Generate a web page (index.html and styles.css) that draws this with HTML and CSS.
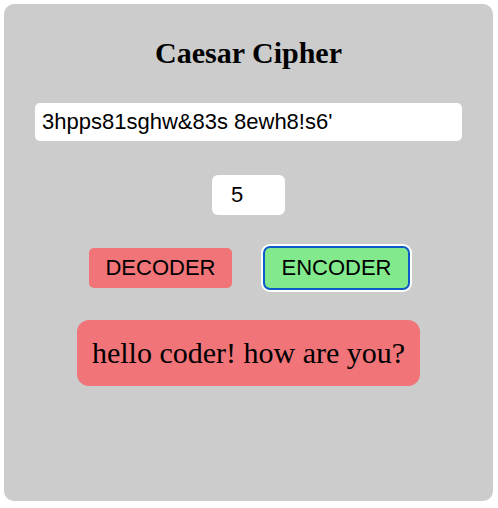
FILE: index.html
```html
<!DOCTYPE html>
<html lang="en">
<head>
<meta charset="utf-8">
<title>Caesar Cipher</title>
<link rel="stylesheet" href="styles.css">
</head>
<body>
<main class="card">
  <h2 class="title">Caesar Cipher</h2>
  <input class="text-input" type="text" value="3hpps81sghw&amp;83s 8ewh8!s6'">
  <input class="shift-input" type="number" value="5">
  <div class="actions">
    <button class="btn btn-decode" type="button">DECODER</button>
    <button class="btn btn-encode is-focused" type="button">ENCODER</button>
  </div>
  <div class="output">hello coder! how are you?</div>
</main>
</body>
</html>
```
FILE: styles.css
```css
html, body {
  margin: 0;
  padding: 0;
  background: #ffffff;
}

body {
  padding: 4px;
  font-family: "Liberation Serif", "Times New Roman", serif;
}

.card {
  box-sizing: border-box;
  width: 489px;
  height: 497px;
  background: #cccccc;
  border-radius: 10px;
  padding: 32px 31px 0;
  display: flex;
  flex-direction: column;
  align-items: center;
}

.title {
  margin: 0;
  font-family: "Liberation Serif", "Times New Roman", serif;
  font-weight: bold;
  font-size: 30px;
  line-height: 34px;
  color: #000;
}

.text-input {
  box-sizing: border-box;
  margin-top: 33px;
  width: 100%;
  height: 38px;
  padding: 0 7px;
  border: none;
  border-radius: 5px;
  background: #ffffff;
  font-family: "Liberation Sans", Arial, sans-serif;
  font-size: 22px;
  color: #000;
  outline: none;
}

.shift-input {
  box-sizing: border-box;
  margin-top: 34px;
  width: 73px;
  height: 40px;
  padding: 0 0 0 19px;
  border: none;
  border-radius: 6px;
  background: #ffffff;
  font-family: "Liberation Sans", Arial, sans-serif;
  font-size: 22px;
  color: #000;
  outline: none;
  -moz-appearance: textfield;
}

.shift-input::-webkit-inner-spin-button,
.shift-input::-webkit-outer-spin-button {
  -webkit-appearance: none;
  margin: 0;
}

.actions {
  margin-top: 33px;
  display: flex;
  gap: 33px;
}

.btn {
  box-sizing: border-box;
  width: 143px;
  height: 40px;
  padding: 0;
  border: none;
  border-radius: 5px;
  font-family: "Liberation Sans", Arial, sans-serif;
  font-size: 22px;
  color: #000;
  cursor: pointer;
}

.btn-decode {
  background: #f07478;
}

.btn-encode {
  background: #82ea8c;
}

.btn.is-focused {
  box-shadow: 0 0 0 2px #0b5cc9, 0 0 0 4px #ffffff;
  border-radius: 5px;
}

.output {
  box-sizing: border-box;
  margin-top: 32px;
  height: 66px;
  padding: 16px 15px;
  background: #f07478;
  border-radius: 12px;
  font-family: "Liberation Serif", "Times New Roman", serif;
  font-size: 30px;
  line-height: 34px;
  color: #000;
  white-space: nowrap;
}
```
